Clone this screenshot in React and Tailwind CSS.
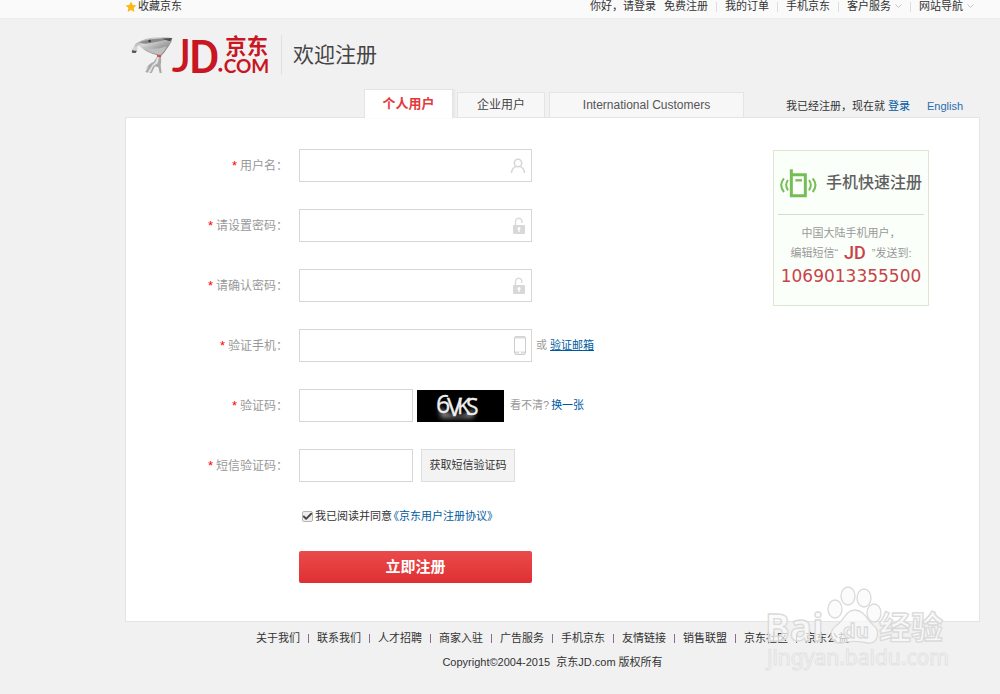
import { useState } from 'react';
import { Check } from 'lucide-react';

const NAV_LINKS = [
  { label: '我的订单' },
  { label: '手机京东' },
  { label: '客户服务', menu: true },
  { label: '网站导航', menu: true },
];

const FOOTER_LINKS = [
  '关于我们',
  '联系我们',
  '人才招聘',
  '商家入驻',
  '广告服务',
  '手机京东',
  '友情链接',
  '销售联盟',
  '京东社区',
  '京东公益',
];

function TopBar() {
  return (
    <div className="bg-[#fafafa] border-b border-[#ececec]">
      <div className="flex items-start justify-between h-[18px] pl-[125px] pr-[26px] leading-[13px]">
        <a href="#" className="flex items-center gap-px">
          <svg width="12" height="12" viewBox="0 0 24 24" fill="#fdb813">
            <path d="M12 1l3.3 7 7.7.9-5.700 5.300 1.500 7.600L12 18l-6.800 3.800 1.500-7.600L1 8.900 8.700 8z" />
          </svg>
          收藏京东
        </a>
        <div className="flex items-center">
          <span>你好，请登录</span>
          <a href="#" className="ml-2">免费注册</a>
          {NAV_LINKS.map((item) => (
            <div key={item.label} className="flex items-center">
              <span className="w-px h-[10px] bg-[#dddddd] mx-2" />
              <a href="#" className="flex items-center">
                {item.label}
                {item.menu && (
                  <svg width="7" height="5" viewBox="0 0 7 5" fill="none" stroke="#c4c4c4" className="ml-1">
                    <path d="M0.500 0.500L3.500 3.500L6.500 0.500" />
                  </svg>
                )}
              </a>
            </div>
          ))}
        </div>
      </div>
    </div>
  );
}

function Logo() {
  return (
    <svg width="140" height="42" viewBox="60 102 420 126" className="overflow-visible" role="img" aria-label="JD.COM 京东">
      <defs>
        <linearGradient id="steel" x1="0" y1="0" x2="1" y2="1">
          <stop offset="0" stopColor="#6f6f6f" />
          <stop offset="0.35" stopColor="#d8d8d8" />
          <stop offset="0.6" stopColor="#a5a5a5" />
          <stop offset="1" stopColor="#6a6a6a" />
        </linearGradient>
      </defs>
      {/* Dog head and muzzle */}
      <path d="M84 127Q108 114 142 112Q168 109 187 115Q186 128 170 147Q163 160 153 167L140 165Q112 158 99 147L85 136Q80 143 82 151L77 159L65 158Q62 150 72 141Q74 131 84 127Z" fill="url(#steel)" />
      <path d="M88 127Q130 112 187 115Q150 125 119 130Q100 134 88 127Z" fill="#8a8a8a" />
      <path d="M96 139Q128 154 170 139Q163 157 151 165Q117 160 96 139Z" fill="#bfbfbf" />
      <path d="M156 116L187 114L181 124Q170 121 156 116Z" fill="#4f4f4f" />
      <circle cx="119" cy="123" r="4" fill="#3f3f3f" />
      <path d="M66 151L80 153L77 159L66 158Z" fill="#555" />
      {/* Legs */}
      <path d="M141 170L153 170Q155 183 152 197L155 219L149 219L145 202L135 199L125 219L118 219L123 202L113 218L106 216Q113 204 117 199L108 207Q116 190 131 186Z" fill="#a9a9a9" />
      <path d="M142 172L147 172L143 190L130 198L121 217L118 217Q123 195 136 187Z" fill="#e4e4e4" />
      <path d="M141 165L154 166L153 172L141 170Z" fill="#e0413a" />
      <g fill="#c81623">
        <text x="185" y="217" fontFamily="Lato" fontWeight="500" fontSize="140">J</text>
        <text x="237" y="218" fontFamily="Roboto" fontWeight="500" fontSize="141">D</text>
        <circle cx="331" cy="209" r="6" />
        <text x="341" y="218" fontFamily="Lato" fontWeight="700" fontSize="57">COM</text>
        <text x="346" y="162" fontFamily="Noto Sans CJK SC" fontWeight="700" fontSize="64">京东</text>
      </g>
    </svg>
  );
}

function Header() {
  return (
    <header className="flex items-center h-[70px] pl-[130px] pt-[2px]">
      <Logo />
      <span className="w-px h-[40px] bg-[#e0e0e0] ml-[11px] mr-[11px]" />
      <h1 className="text-[21px] leading-[30px] text-[#444444]">欢迎注册</h1>
    </header>
  );
}

function Tabs() {
  return (
    <div className="flex items-end justify-between h-[28px] pl-[239px] pr-[17px]">
      <div className="flex items-end gap-1">
        <button className="relative z-10 -mb-px w-[89px] h-[29px] bg-white border border-b-0 border-[#e4e4e4] text-[13px] font-bold text-[#e4393c] shadow-[2px_0_1px_#e9e9e9]">
          个人用户
        </button>
        <button className="w-[88px] h-[25px] bg-[#f7f7f7] border border-b-0 border-[#e4e4e4] text-xs text-[#444444]">
          企业用户
        </button>
        <button className="w-[195px] h-[25px] bg-[#f7f7f7] border border-b-0 border-[#e4e4e4] text-xs text-[#555555]">
          International Customers
        </button>
      </div>
      <div className="flex h-[22px] leading-[22px]">
        <span>我已经注册，现在就</span>
        <a href="#" className="ml-[3px] text-[#005aa0]">登录</a>
        <a href="#" className="ml-[17px] text-[#2b6cad]">English</a>
      </div>
    </div>
  );
}

function UserIcon() {
  return (
    <svg width="16" height="16" viewBox="0 0 16 16" fill="none" stroke="#d6d6d6" strokeWidth="1.500">
      <circle cx="8" cy="5" r="3.700" />
      <path d="M1.500 15C1.700 11.500 3.700 9.300 6 8.400M14.500 15C14.300 11.500 12.300 9.300 10 8.400" />
    </svg>
  );
}

function LockIcon() {
  return (
    <svg width="14" height="18" viewBox="0 0 14 18" fill="none">
      <path d="M3.500 8V4.500a3.200 3.200 0 0 1 6.400 0V6" stroke="#dcdcdc" strokeWidth="1.500" />
      <rect x="1" y="8" width="12" height="9" rx="1" fill="#d8d8d8" />
      <circle cx="7" cy="11.500" r="1.500" fill="#fff" />
      <path d="M7 12v3" stroke="#fff" strokeWidth="1.300" />
    </svg>
  );
}

function PhoneIcon() {
  return (
    <svg width="12" height="19" viewBox="0 0 12 19" fill="none">
      <rect x="0.500" y="0.500" width="11" height="18" rx="1.500" stroke="#cfcfcf" />
      <path d="M1 1.500h10M1 16.500h10" stroke="#d9d9d9" strokeWidth="2" />
      <circle cx="6" cy="16.500" r="1" fill="#fff" />
    </svg>
  );
}

function Field({ id, label, type = 'text', short, icon, children }) {
  return (
    <div className="flex items-center h-[33px]">
      <label htmlFor={id} className="w-[173px] pr-[11px] text-right text-xs text-[#999999]">
        <span className="mr-[3px] text-[#ff0000] text-[13px]">*</span>
        {label}：
      </label>
      <div className="relative">
        <input
          id={id}
          type={type}
          className={`block h-[33px] px-2 bg-white border border-[#d6d6d6] outline-none ${short ? 'w-[114px]' : 'w-[233px]'}`}
        />
        {icon && <span className="absolute right-[6px] top-0 h-full flex items-center pointer-events-none">{icon}</span>}
      </div>
      {children}
    </div>
  );
}

function Captcha() {
  return (
    <svg width="87" height="32" viewBox="0 0 87 32" className="ml-1 overflow-visible" role="img" aria-label="验证码">
      <defs>
        <filter id="glow" x="-30%" y="-30%" width="160%" height="180%">
          <feGaussianBlur stdDeviation="2.500" />
        </filter>
      </defs>
      <rect width="87" height="32" fill="#000" />
      <path d="M22 16Q40 34 58 18L56 28L24 28Z" fill="#888" filter="url(#glow)" />
      <g fontFamily="Open Sans" fill="#eeeeee" stroke="#eeeeee" strokeWidth="0.300">
        <text x="19" y="23" fontSize="25">6</text>
        <text x="30" y="26" fontSize="25">V</text>
        <text x="40" y="24" fontSize="22">K</text>
        <text x="49" y="25" fontSize="23">S</text>
      </g>
    </svg>
  );
}

function MobileCard() {
  return (
    <aside className="w-[156px] h-[156px] mt-px shrink-0 px-1 border border-[#dbe6d3] bg-[#fbfffa] text-center text-[#999999]">
      <div className="flex items-center justify-between h-[64px] px-[2px] border-b border-[#d5dbd2]">
        <svg width="37" height="30" viewBox="0 0 111 90" fill="none" stroke="#76bd55">
          <path d="M34 4V83H76V20H34" strokeWidth="9" />
          <path d="M46 37H66" strokeWidth="7" />
          <path d="M24 36Q13 51 24 67M12 31Q-5 51 12 72M87 36Q98 51 87 67M98 31Q115 51 98 72" strokeWidth="6" />
        </svg>
        <h2 className="text-base font-medium text-[#606060]">手机快速注册</h2>
      </div>
      <p className="mt-[9px] text-[11px] leading-[18px]">中国大陆手机用户，</p>
      <p className="flex items-center justify-center gap-[6px] text-[11px] leading-[22px]">
        编辑短信“
        <strong className="font-[Roboto] text-lg leading-[22px] font-medium text-[#c8444a]">JD</strong>
        ”发送到:
      </p>
      <p className="font-['DejaVu_Sans'] text-[17px] leading-[24px] text-[#c8444a]">1069013355500</p>
    </aside>
  );
}

function RegisterForm() {
  const [agreed, setAgreed] = useState(true);

  return (
    <form className="flex flex-col gap-[27px]" onSubmit={(e) => e.preventDefault()}>
      <Field id="username" label="用户名" icon={<UserIcon />} />
      <Field id="password" label="请设置密码" type="password" icon={<LockIcon />} />
      <Field id="confirm" label="请确认密码" type="password" icon={<LockIcon />} />
      <Field id="mobile" label="验证手机" icon={<PhoneIcon />}>
        <span className="ml-1 text-[#999999]">或</span>
        <a href="#" className="ml-[3px] text-[#005aa0] underline">验证邮箱</a>
      </Field>
      <Field id="captcha" label="验证码" short>
        <Captcha />
        <span className="ml-[6px] text-[#999999]">看不清?</span>
        <a href="#" className="ml-[2px] text-[#005aa0]">换一张</a>
      </Field>
      <Field id="sms" label="短信验证码" short>
        <button type="button" className="ml-2 w-[94px] h-[33px] bg-[#f3f3f3] border border-[#dedede]">
          获取短信验证码
        </button>
      </Field>

      <div className="pl-[173px]">
        <label className="flex items-center h-[15px] pl-[3px]">
          <span className="relative flex mr-[2px]">
            <input
              type="checkbox"
              checked={agreed}
              onChange={(e) => setAgreed(e.target.checked)}
              className="appearance-none w-[11px] h-[11px] border border-[#b4b4b4] rounded-xs bg-[#eeeeee]"
            />
            {agreed && <Check size={11} strokeWidth={4} className="absolute inset-0 text-[#444444] pointer-events-none" />}
          </span>
          我已阅读并同意
          <a href="#" className="-ml-1 text-[#005aa0]">《京东用户注册协议》</a>
        </label>
        <button
          type="submit"
          className="mt-[27px] block w-[233px] h-[32px] rounded-xs bg-linear-to-b from-[#ea4a4b] to-[#df2f32] text-[15px] font-bold text-white"
        >
          立即注册
        </button>
      </div>
    </form>
  );
}

function Watermark() {
  return (
    <svg
      width="190"
      height="90"
      viewBox="0 0 190 90"
      className="absolute right-[46px] bottom-[19px] overflow-visible pointer-events-none"
      fill="#fafafa"
      fillOpacity="0.7"
      stroke="#dadada"
      strokeWidth="1.300"
    >
      <text x="1" y="56" fontFamily="Open Sans" fontWeight="700" fontSize="37">Bai</text>
      <ellipse cx="71" cy="24" rx="7" ry="9" />
      <ellipse cx="84" cy="11" rx="7" ry="9" />
      <ellipse cx="100" cy="13" rx="7" ry="9" />
      <ellipse cx="110" cy="28" rx="7" ry="9" />
      <path d="M91 25C82 25 80 35 73 40C63 47 67 59 77 58C85 56 96 56 104 58C114 59 117 46 109 40C103 35 100 25 91 25Z" />
      <text x="79" y="53" fontFamily="Open Sans" fontWeight="700" fontSize="20">du</text>
      <text x="115" y="54" fontFamily="Noto Sans CJK SC" fontWeight="700" fontSize="32">经验</text>
      <text x="3" y="80" fontFamily="Noto Sans" fontSize="21" stroke="#e2e2e2" strokeWidth="1">jingyan.baidu.com</text>
    </svg>
  );
}

export default function App() {
  return (
    <div className="relative min-h-screen bg-[#f1f1f1] font-['Liberation_Sans','Noto_Sans_CJK_SC',sans-serif] text-[11px] text-[#333333]">
      <TopBar />
      <Header />

      <main className="pl-[125px] pr-5">
        <Tabs />
        <section className="flex items-start justify-between pt-[31px] pb-[38px] pr-[50px] bg-white border border-[#e4e4e4]">
          <RegisterForm />
          <MobileCard />
        </section>
      </main>

      <footer className="pl-[125px] pr-5 pt-[7px]">
        <nav className="flex items-center justify-center gap-2 h-[18px]">
          {FOOTER_LINKS.map((link, i) => (
            <div key={link} className="flex items-center gap-2">
              {i > 0 && <span className="w-px h-[9px] bg-[#8a6a95]" />}
              <a href="#">{link}</a>
            </div>
          ))}
        </nav>
        <p className="mt-[6px] leading-[18px] text-center">Copyright©2004-2015&nbsp; 京东JD.com 版权所有</p>
      </footer>

      <Watermark />
    </div>
  );
}
